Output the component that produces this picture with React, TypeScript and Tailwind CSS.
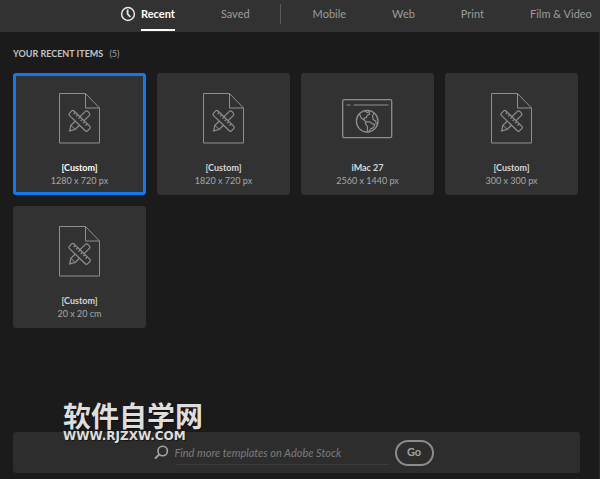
import React from "react";

interface Preset {
  name: string;
  size: string;
  kind: "document" | "web";
}

const presets: Preset[] = [
  { name: "[Custom]", size: "1280 x 720 px", kind: "document" },
  { name: "[Custom]", size: "1820 x 720 px", kind: "document" },
  { name: "iMac 27", size: "2560 x 1440 px", kind: "web" },
  { name: "[Custom]", size: "300 x 300 px", kind: "document" },
  { name: "[Custom]", size: "20 x 20 cm", kind: "document" },
];

const categories = ["Mobile", "Web", "Print", "Film & Video"];

const ClockIcon = () => (
  <svg width="16" height="16" viewBox="0 0 16 16" fill="none" stroke="#e8e8e8" aria-hidden="true">
    <circle cx="8" cy="8" r="6.4" strokeWidth="1.5" />
    <path d="M7.6 3.6V8l2.8 3" strokeWidth="1.8" />
  </svg>
);

const DocumentIcon = () => (
  <svg width="42" height="51" viewBox="0 0 42 51" fill="none" stroke="#8f8f8f" aria-hidden="true">
    <path d="M.5.5h26l14 14.5v35H.5z" strokeLinejoin="round" />
    <path d="M26.5.5V15h14" />
    {/* Pencil */}
    <path
      d="M10.6 37.9l1.3-5.6L26.2 18.6a2 2 0 0 1 2.8 0l1.2 1.2a2 2 0 0 1 0 2.8L16.2 36.5z"
      strokeWidth="1.2"
    />
    <path d="M11.9 32.3l4.3 4.2" />
    {/* Ruler */}
    <g transform="rotate(44 20.7 27.8)" strokeWidth="1.2">
      <rect x="8" y="24.7" width="25.4" height="6.4" rx="1.8" fill="#323232" />
      <path d="M11.7 25v2.2M15 25v2.2M18.3 25v2.2M21.6 25v2.2M24.9 25v2.2M28.2 25v2.2" />
    </g>
  </svg>
);

const WebIcon = () => (
  <svg width="51" height="40" viewBox="0 0 51 40" fill="none" stroke="#8f8f8f" aria-hidden="true">
    <rect x=".7" y=".7" width="49" height="38" rx="1.5" strokeWidth="1.3" />
    <path d="M4.5 6h4M11.5 6h35" />
    <circle cx="25.2" cy="22.2" r="10.8" strokeWidth="1.3" />
    {/* Continents */}
    <path
      d="M17.4 14.8l1.8 4.2 2.9 2.1.2-2 2.2-.6.6-2.2 2.5-1.2-.4-2.6M22.1 21.1l2 1.6 3.4.1 2.4 1.8 2.8.8-1.2 3.2-2.6 1.3-2.4 2.9M24.1 22.7l-.8 2 2.2 2.8-.2 4.9M27.6 12.4l-2.3 1.1-2.4-1.3M32.3 14l-1.8 2.8.7 3.6 2.6 1.9.6 3"
      strokeLinejoin="round"
      strokeWidth="1.2"
    />
  </svg>
);

const SearchIcon = () => (
  <svg width="15" height="15" viewBox="0 0 15 15" fill="none" stroke="#a6a6a6" aria-hidden="true">
    <circle cx="8.7" cy="6" r="4.7" strokeWidth="1.6" />
    <path d="M5.2 9.4L1 13.6" strokeWidth="2" />
  </svg>
);

const PresetCard = ({ preset, selected }: { preset: Preset; selected: boolean }) => (
  <button
    type="button"
    aria-pressed={selected}
    className={
      selected
        ? "flex flex-col items-center rounded-[3px] border-3 border-[#1577ec] bg-[#323232] pt-[17px] pb-[5px]"
        : "flex flex-col items-center rounded-[3px] border-3 border-[#323232] bg-[#323232] pt-[17px] pb-[5px]"
    }
  >
    <span className="flex h-[51px] items-center justify-center">
      {preset.kind === "web" ? <WebIcon /> : <DocumentIcon />}
    </span>
    <span
      className={
        selected
          ? "mt-[17px] text-[9px] leading-[13px] font-bold text-white"
          : "mt-[17px] text-[9px] leading-[13px] font-bold text-[#d6d6d6]"
      }
    >
      {preset.name}
    </span>
    <span className="text-[9px] leading-[13px] text-[#a8a8a8]">{preset.size}</span>
  </button>
);

export default function App() {
  return (
    <div className="flex min-h-screen flex-col bg-[#1b1b1b] font-['Lato','Noto_Sans',sans-serif]">
      <nav className="flex h-8 items-stretch bg-[#323232] pl-[20%] text-[11px] leading-7 whitespace-nowrap text-[#9c9c9c]">
        <a href="#recent" className="flex gap-[5px] font-bold text-white" aria-current="page">
          <span className="flex h-7 items-center">
            <ClockIcon />
          </span>
          <span className="h-[31px] border-b-2 border-white">Recent</span>
        </a>
        <a href="#saved" className="ml-[46px]">
          Saved
        </a>
        <span className="mr-8 ml-[30px] mt-1 h-5 w-px shrink-0 bg-[#5a5a5a]" />
        <div className="flex gap-[46px]">
          {categories.map((category) => (
            <a key={category} href="#category">
              {category}
            </a>
          ))}
        </div>
      </nav>

      <main className="flex grow flex-col border-r border-[#2a2a2a] pt-3.5 pr-[19px] pb-1.5 pl-[13px]">
        <h1 className="text-[9px] leading-4 font-bold text-[#c4c4c4]">
          YOUR RECENT ITEMS <span className="ml-1 font-normal text-[#a0a0a0]">(5)</span>
        </h1>

        <div className="mt-[11px] mr-0.5 mb-6 grid grid-cols-4 gap-[11px]">
          {presets.map((preset, index) => (
            <PresetCard key={preset.size} preset={preset} selected={index === 0} />
          ))}
        </div>

        <div className="relative mt-auto">
          <form
            className="flex h-[41px] items-center justify-center rounded-[3px] bg-[#2d2d2d] pr-1.5"
            onSubmit={(event) => event.preventDefault()}
          >
            <label htmlFor="stock-search" aria-label="Search Adobe Stock" className="mr-1.5">
              <SearchIcon />
            </label>
            <input
              id="stock-search"
              type="text"
              placeholder="Find more templates on Adobe Stock"
              className="h-6 w-[214px] border-b border-[#3d3d3d] bg-transparent text-[11px] italic outline-none placeholder:text-[#7c7c7c]"
            />
            <button
              type="submit"
              className="ml-1.5 h-[26px] w-[39px] rounded-full border-2 border-[#8c8c8c] text-[11px] font-bold text-[#a3a3a3]"
            >
              Go
            </button>
          </form>

          {/* Site mark over the corner of the search bar */}
          <div className="pointer-events-none absolute bottom-[31px] left-[50px] whitespace-nowrap text-[#dedede] [text-shadow:1px_1px_1px_#0008]">
            <p className="font-['Noto_Sans_CJK_SC',sans-serif] text-[28px] leading-[30px] font-bold">软件自学网</p>
            <p className="font-['DejaVu_Sans',sans-serif] text-[12px] leading-3 font-bold">WWW.RJZXW.COM</p>
          </div>
        </div>
      </main>
    </div>
  );
}
